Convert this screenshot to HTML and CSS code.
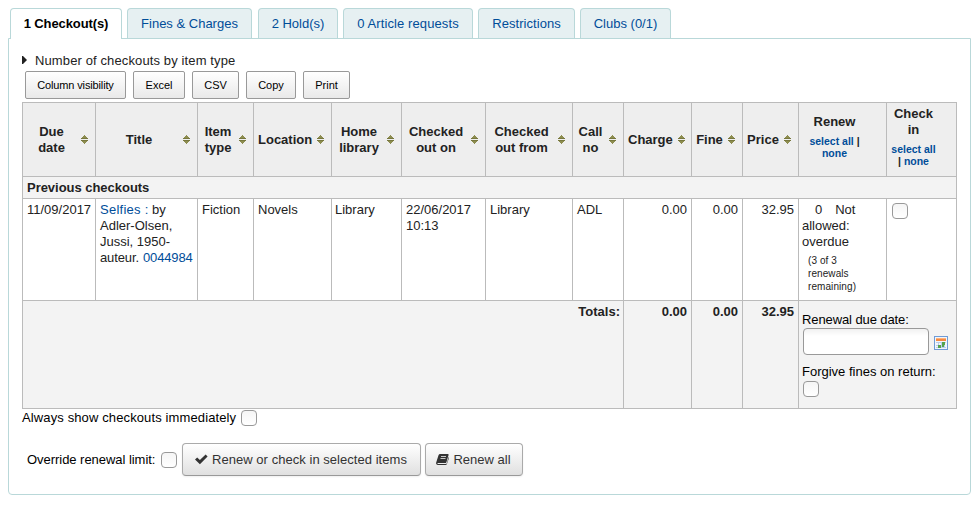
FILE: index.html
```
<!DOCTYPE html>
<html lang="en">
<head>
<meta charset="utf-8">
<title>Checkouts</title>
<link rel="stylesheet" href="styles.css">
</head>
<body>
<svg class="defs" width="0" height="0" aria-hidden="true">
  <symbol id="sort" viewBox="0 0 7 9"><path d="M3 0h1v1h1v1h1v1h1v1H0V3h1V2h1V1h1zM0 5h7v1H6v1H5v1H4v1H3V8H2V7H1V6H0z" fill="#8d8d50"/><path d="M0 3h7v1H0zM0 5h7v1H0z" fill="#77773d"/></symbol>
</svg>
<nav class="tabs">
  <a class="tab active t1">1 Checkout(s)</a>
  <a class="tab t2">Fines &amp; Charges</a>
  <a class="tab t3">2 Hold(s)</a>
  <a class="tab t4">0 Article requests</a>
  <a class="tab t5">Restrictions</a>
  <a class="tab t6">Clubs (0/1)</a>
</nav>
<main class="panel">
  <div class="summary"><svg width="5" height="8" viewBox="0 0 5 8"><path d="M0 0h1l4 4-4 4H0z" fill="#222"/></svg><span>Number of checkouts by item type</span></div>
  <div class="tools">
    <button class="b1">Column visibility</button><button class="b2">Excel</button><button class="b3">CSV</button><button class="b4">Copy</button><button class="b5">Print</button>
  </div>
  <table>
    <colgroup><col class="c1"><col class="c2"><col class="c3"><col class="c4"><col class="c5"><col class="c6"><col class="c7"><col class="c8"><col class="c9"><col class="c10"><col class="c11"><col class="c12"><col class="c13"></colgroup>
    <thead>
      <tr class="head">
        <th><div class="h"><span>Due<br>date</span><svg><use href="#sort"/></svg></div></th>
        <th><div class="h"><span>Title</span><svg><use href="#sort"/></svg></div></th>
        <th><div class="h"><span>Item<br>type</span><svg><use href="#sort"/></svg></div></th>
        <th><div class="h"><span>Location</span><svg><use href="#sort"/></svg></div></th>
        <th><div class="h"><span>Home<br>library</span><svg><use href="#sort"/></svg></div></th>
        <th><div class="h"><span>Checked<br>out on</span><svg><use href="#sort"/></svg></div></th>
        <th><div class="h"><span>Checked<br>out from</span><svg><use href="#sort"/></svg></div></th>
        <th><div class="h"><span>Call<br>no</span><svg><use href="#sort"/></svg></div></th>
        <th><div class="h"><span>Charge</span><svg><use href="#sort"/></svg></div></th>
        <th><div class="h"><span>Fine</span><svg><use href="#sort"/></svg></div></th>
        <th><div class="h"><span>Price</span><svg><use href="#sort"/></svg></div></th>
        <th class="plain">Renew<p class="pick"><a>select all</a> |<br><a>none</a></p></th>
        <th class="plain">Check<br>in<p class="pick"><a>select all</a><br>| <a>none</a></p></th>
      </tr>
    </thead>
    <tbody>
      <tr class="group"><th colspan="13">Previous checkouts</th></tr>
      <tr class="item">
        <td>11/09/2017</td>
        <td><a class="title">Selfies :</a> by<br>Adler-Olsen,<br>Jussi, 1950-<br><span class="author">auteur. <a>0044984</a></span></td>
        <td>Fiction</td><td>Novels</td><td class="tight">Library</td><td>22/06/2017<br>10:13</td><td>Library</td><td>ADL</td>
        <td class="num">0.00</td><td class="num">0.00</td><td class="num">32.95</td>
        <td class="tight"><span class="count">0</span>Not<br>allowed:<br>overdue<div class="left">(3 of 3<br>renewals<br>remaining)</div></td>
        <td><span class="check"></span></td>
      </tr>
    </tbody>
    <tfoot>
      <tr class="totals">
        <td colspan="8" class="num label">Totals:</td><td class="num">0.00</td><td class="num">0.00</td><td class="num">32.95</td>
        <td colspan="2" class="renewal">
          <div class="due">Renewal due date:</div>
          <div class="date"><span class="field"></span>
            <svg width="14" height="14" viewBox="0 0 14 14"><path fill="#6f9bd6" d="M0 0h14v14H0z"/><path fill="#f1f6fc" d="M1 1h12v12H1z"/><path fill="#f58a42" d="M2 2h10v3H2z"/><path fill="#ffb27a" d="M2 2h10v1H2z"/><path fill="#b9cdea" d="M2 6h10v1H2zM2 9h5v1H2zM2 11h10v1H2zM4 6h1v6H4zM7 6h1v6H7zM10 6h1v6h-1z"/><path fill="#55a34c" d="M8 6h3v3H8zM4 9h3v3H4zM8 9h2v2H8z"/></svg>
          </div>
          <div>Forgive fines on return:</div>
          <span class="check"></span>
        </td>
      </tr>
    </tfoot>
  </table>
  <div class="always"><span>Always show checkouts immediately</span><span class="check"></span></div>
  <div class="actions"><span class="override">Override renewal limit:</span><span class="check"></span>
    <button class="btn a1"><svg width="13" height="11" viewBox="0 0 13 11"><path d="M0 5.6 2.2 3.4 4.9 6.1 10.6.4 12.6 2.5 4.9 10.2z" fill="#333"/></svg>Renew or check in selected items</button>
    <button class="btn a2"><svg width="13" height="11" viewBox="0 0 13 11"><path d="M4.2 0h7.6q1 0 .8 1l-2.2 7.2q-.3.9-1.3.9H2q-.7 0-.6.6.1.4.8.4H10q.5 0 .7-.5l2-6.6q.5.3.3 1l-2.1 6q-.3 1-1.3 1H1.8Q.3 11 .1 9.6q-.1-.6.1-1.2L2.500 1.2Q2.9.1 4.2 0z" fill="#333"/><path d="M5 2.500h5M4.500 4.500h5" stroke="#eee" stroke-width=".8"/></svg>Renew all</button>
  </div>
</main>
</body>
</html>
```
FILE: styles.css
```
* { box-sizing: border-box; }
body { margin: 8px 7px 0 8px; background: #fff; color: #000; font: 13px/16px "Liberation Sans", Arial, sans-serif; }
a { color: #004d99; text-decoration: none; }
.defs { position: absolute; }
.tabs { display: flex; gap: 5px; padding-left: 2px; height: 31px; }
.tab { height: 30px; border: 1px solid #b9d8d9; border-bottom: 0; border-radius: 4px 4px 0 0; background: #e6f0f2; text-align: center; line-height: 30px; }
.tab.active { height: 31px; background: #fff; color: #000; font-weight: bold; position: relative; }
.t1 { width: 112px; letter-spacing: -.1px; } .t2 { width: 125px; } .t3 { width: 80px; margin-left: 1px; } .t4 { width: 130px; letter-spacing: .1px; } .t5 { width: 97px; letter-spacing: .05px; } .t6 { width: 91px; }
.panel { height: 457px; margin-top: -1px; padding: 14px 13px 0; border: 1px solid #b9d8d9; border-radius: 0 0 4px 4px; }
.summary { display: flex; align-items: center; gap: 8px; height: 16px; color: #222; letter-spacing: .12px; }
.summary svg { margin-top: -2px; }
.tools { display: flex; gap: 7px; margin: 2px 0 3px 3px; }
.tools button { height: 28px; padding: 0; border: 1px solid #999; border-radius: 2px; background: linear-gradient(#fff, #e9e9e9); color: #000; font: 11px/26px "Liberation Sans", Arial, sans-serif; }
.b1 { width: 101px; letter-spacing: -.14px; } .b2 { width: 52px; } .b3 { width: 47px; } .b4 { width: 50px; } .b5 { width: 47px; }
table { width: 935px; table-layout: fixed; border-collapse: collapse; color: #222; }
.c1 { width: 73px; } .c2 { width: 102px; } .c3 { width: 56px; } .c4 { width: 78px; } .c5 { width: 70px; } .c6 { width: 84px; } .c7 { width: 87px; } .c8 { width: 51px; } .c9 { width: 68px; } .c10 { width: 51px; } .c11 { width: 56px; } .c12 { width: 88px; } .c13 { width: 70px; }
th, td { padding: 3px 4px 0; border: 1px solid #bbb; text-align: left; vertical-align: top; white-space: nowrap; }
.head { height: 74px; }
.head th { padding: 0; background: #eee; vertical-align: middle; text-align: center; }
.h { display: flex; align-items: center; padding: 0 7px 0 4px; }
.h span { flex: 1; }
.h svg { width: 7px; height: 9px; flex: none; margin-left: 5px; }
.head .plain { padding-right: 16px; }
.pick { margin: 5px 0 6px; font-size: 10.5px; line-height: 12px; }
.group { height: 22px; }
.group th { letter-spacing: -.03px; }
.group th, .totals td { background: #f3f3f3; }
.item { height: 102px; }
td.tight { padding-left: 3px; }
td.num { padding-right: 4px; text-align: right; }
.totals td.label { padding-right: 3px; }
.title { letter-spacing: .25px; }
.author { letter-spacing: -.12px; }
.author a { margin-left: .5px; }
.count { margin: 0 13px; }
.left { margin: 4px 0 0 6px; font-size: 10px; line-height: 13px; letter-spacing: .08px; }
.check { display: block; flex: none; width: 16px; height: 16px; border: 1px solid #999; border-radius: 4px; background: linear-gradient(#f5f5f5, #fff); margin: 1px; }
.totals { height: 108px; }
.totals td.num { font-weight: bold; }
.totals .renewal { padding: 11px 0 0 3px; color: #000; }
.due { letter-spacing: -.1px; }
.date { display: flex; align-items: center; gap: 5px; margin-bottom: 9px; }
.date svg { margin-top: 2px; }
.field { width: 126px; height: 27px; margin-left: 1px; border: 1px solid #999; border-radius: 4px; background: linear-gradient(#f1f1f1, #fff 7px); }
.always { display: flex; align-items: center; gap: 4px; height: 18px; letter-spacing: .12px; }
.actions { display: flex; align-items: center; gap: 4px; margin: 16px 0 0 5px; }
.override { width: 129px; letter-spacing: -.04px; }
.btn { display: flex; align-items: center; justify-content: center; gap: 4px; height: 33px; padding: 0 1px 0 0; border: 1px solid #aaa; border-bottom-color: #999; border-radius: 4px; background: linear-gradient(#fff, #e0e0e0); box-shadow: 0 1px 2px #0001; color: #333; font: 13px/16px "Liberation Sans", Arial, sans-serif; }
.a1 { width: 239px; letter-spacing: .04px; } .a2 { width: 98px; }
```
